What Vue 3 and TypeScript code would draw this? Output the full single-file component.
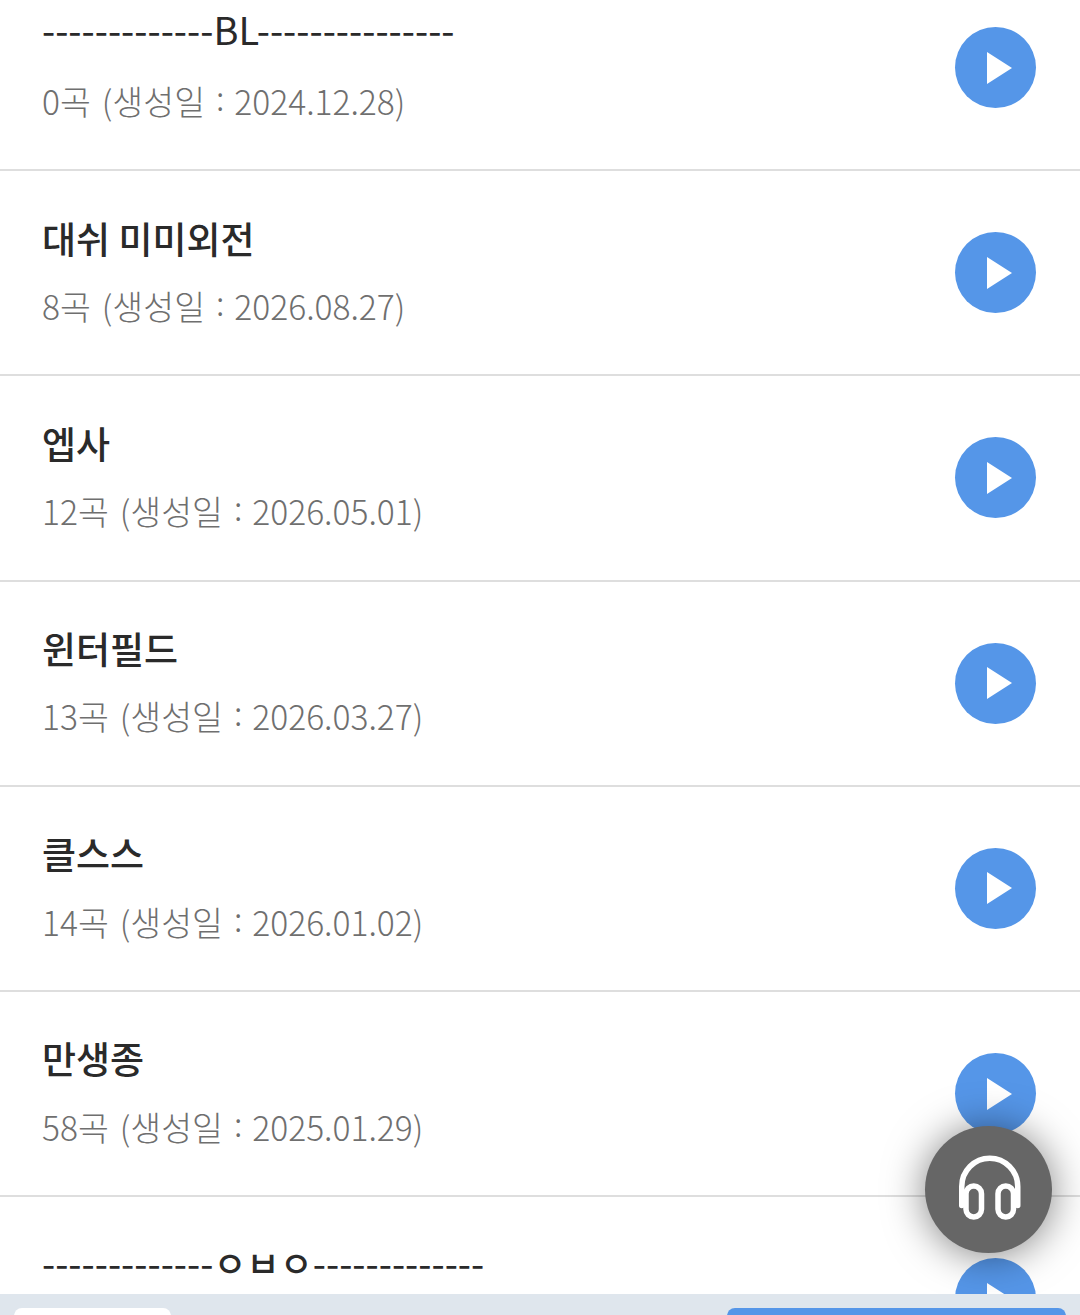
<template>
  <div class="page">
    <ul class="playlist">
      <li v-for="item in playlists" :key="item.name" class="row">
        <div class="info">
          <div class="name" :class="{ divider: item.divider }">
            <template v-if="item.jamo">{{ item.name }}<span class="jamo">{{ item.jamo }}</span>{{ item.name }}</template>
            <template v-else>{{ item.name }}</template>
          </div>
          <div class="meta">
            <template v-if="item.date">{{ item.count }}곡 (생성일 <span class="colon">:</span> {{ item.date }})</template>
          </div>
        </div>
        <button class="play" type="button" aria-label="재생">
          <svg viewBox="0 0 25 32" width="25" height="32">
            <path d="M0 0 L25 16 L0 32 Z" fill="#fff" />
          </svg>
        </button>
      </li>
    </ul>

    <button class="player-fab" type="button" aria-label="플레이어">
      <svg viewBox="0 0 80 80" width="80" height="80" fill="none" stroke="#fff" stroke-width="5.5" stroke-linecap="round">
        <path d="M12.75 55.5 V36.5 A28 28.25 0 0 1 68.75 36.5 V55.5" />
        <rect x="17" y="36" width="15.5" height="31" rx="7.75" />
        <rect x="49" y="36" width="15.5" height="31" rx="7.75" />
      </svg>
    </button>

    <div class="bottom-bar">
      <div class="btn-white"></div>
      <div class="btn-blue"></div>
    </div>
  </div>
</template>

<script setup lang="ts">
interface Playlist {
  name: string
  count?: number
  date?: string
  divider?: boolean
  jamo?: string
}

const playlists: Playlist[] = [
  { name: '-------------BL---------------', count: 0, date: '2024.12.28', divider: true },
  { name: '대쉬 미미외전', count: 8, date: '2026.08.27' },
  { name: '엡사', count: 12, date: '2026.05.01' },
  { name: '윈터필드', count: 13, date: '2026.03.27' },
  { name: '클스스', count: 14, date: '2026.01.02' },
  { name: '만생종', count: 58, date: '2025.01.29' },
  // 마지막 줄은 하단 바에 가려서 곡 수가 안 보임
  { name: '-------------', jamo: 'ㅇㅂㅇ', divider: true },
]
</script>

<style>
html,
body {
  margin: 0;
  background: #fff;
}
</style>

<style scoped>
.page {
  position: relative;
  width: 1080px;
  height: 1315px;
  overflow: hidden;
  background: #fff;
  font-family: "Noto Sans CJK KR", "Noto Sans", sans-serif;
}
.playlist {
  list-style: none;
  margin: -34px 0 0;
  padding: 0;
}
.row {
  box-sizing: border-box;
  height: 205.2px;
  display: flex;
  align-items: center;
  justify-content: space-between;
  padding: 0 44px 0 42px;
  border-bottom: 2px solid #dedede;
}
.info {
  display: flex;
  flex-direction: column;
  gap: 19.5px;
  padding-bottom: 5px;
}
.name {
  font-size: 37px;
  line-height: 52px;
  margin-bottom: -4px;
  font-weight: 500;
  color: #2a2a2a;
}
.name.divider {
  font-size: 38px;
  font-weight: 400;
  line-height: 45px;
  margin-bottom: 3px;
}
.jamo {
  font-size: 36px;
  font-weight: 500;
}
.meta {
  font-size: 33.6px;
  line-height: 46px;
  min-height: 46px;
  font-weight: 300;
  word-spacing: 3.5px;
  color: #6f6f6f;
}
.colon {
  vertical-align: 4px;
  letter-spacing: -1px;
}
.play {
  width: 81px;
  height: 81px;
  padding: 0 0 0 8px;
  border: none;
  border-radius: 50%;
  background: #5596e8;
  display: flex;
  align-items: center;
  justify-content: center;
}
.player-fab {
  position: absolute;
  left: 925px;
  top: 1126px;
  width: 127px;
  height: 127px;
  padding: 0;
  border: none;
  border-radius: 50%;
  background: #666;
  box-shadow: 0 2px 40px rgba(0, 0, 0, 0.5);
  display: flex;
  align-items: center;
  justify-content: center;
}
.bottom-bar {
  position: absolute;
  left: 0;
  right: 0;
  bottom: 0;
  height: 21px;
  background: #dfe6ed;
  display: flex;
  justify-content: space-between;
  padding: 14px 14px 0;
  box-sizing: border-box;
}
.btn-white,
.btn-blue {
  height: 20px;
  border-radius: 8px 8px 0 0;
}
.btn-white {
  width: 157px;
  background: #fff;
}
.btn-blue {
  width: 339px;
  background: #5596e8;
}
</style>
